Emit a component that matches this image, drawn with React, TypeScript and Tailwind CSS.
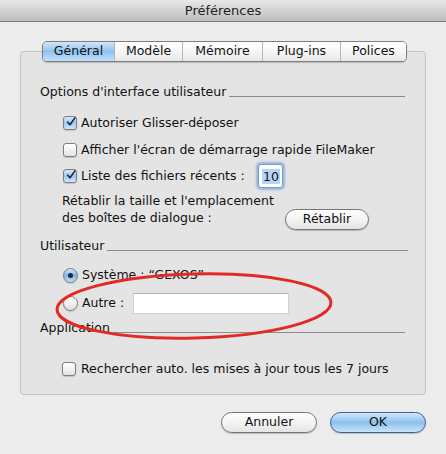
import React from "react";

function CheckBox({ checked }: { checked?: boolean }) {
  return (
    <span
      className={`w-[14px] h-[14px] shrink-0 rounded-[3px] border border-[#7d7d7d] flex items-center justify-center shadow-[0_1px_1px_rgba(0,0,0,0.15)] ${
        checked
          ? "bg-gradient-to-b from-[#d6e9fb] via-[#9cc8ef] to-[#cfe6fb]"
          : "bg-gradient-to-b from-[#ffffff] via-[#f2f2f2] to-[#e2e2e2]"
      }`}
    >
      {checked && (
        <svg width="14" height="14" viewBox="0 0 14 14" className="-mt-[3px] ml-[2px]">
          <path d="M2.5 7.2 L5.6 10.8 L12.5 1.2" fill="none" stroke="#1c2430" strokeWidth="2.2" strokeLinecap="round" strokeLinejoin="round" />
        </svg>
      )}
    </span>
  );
}

function Radio({ checked }: { checked?: boolean }) {
  return (
    <span
      className={`w-[15px] h-[15px] shrink-0 rounded-full border border-[#7d7d7d] flex items-center justify-center shadow-[0_1px_1px_rgba(0,0,0,0.15)] ${
        checked
          ? "bg-gradient-to-b from-[#d0e6fb] via-[#7fb6ea] to-[#c4e0fa]"
          : "bg-gradient-to-b from-[#ffffff] via-[#f0f0f0] to-[#dedede]"
      }`}
    >
      {checked && <span className="w-[5px] h-[5px] rounded-full bg-[#1d2a3a]" />}
    </span>
  );
}

function Heading({ label, pr }: { label: string; pr: string }) {
  return (
    <div className={`flex items-center h-[18px] ${pr}`}>
      <span>{label}</span>
      <span className="flex-1 h-px bg-[#8c8c8c] ml-[3px] mt-[8px]" />
    </div>
  );
}

function PillButton({ label, primary, className = "" }: { label: string; primary?: boolean; className?: string }) {
  return (
    <button
      className={`h-[21px] shrink-0 rounded-full border flex items-center justify-center shadow-[0_1px_1px_rgba(0,0,0,0.2)] ${
        primary
          ? "border-[#3e5f8f] bg-gradient-to-b from-[#d3e8fb] via-[#8cc0ee] to-[#c8e4fb]"
          : "border-[#747474] bg-gradient-to-b from-[#ffffff] via-[#f3f3f3] to-[#e4e4e4]"
      } ${className}`}
    >
      {label}
    </button>
  );
}

const tabs = [
  { label: "Général", w: "w-[71px]", active: true },
  { label: "Modèle", w: "w-[68px]" },
  { label: "Mémoire", w: "w-[80px]" },
  { label: "Plug-ins", w: "w-[78px]" },
  { label: "Polices", w: "w-[66px]" },
];

export default function App() {
  return (
    <div className="w-[446px] h-[454px] bg-[#ececec] flex flex-col text-[12.5px] text-[#111] font-['DejaVu_Sans',sans-serif] overflow-hidden">
      {/* title bar */}
      <div className="h-[22px] shrink-0 flex items-center justify-center bg-gradient-to-b from-[#e9e9e9] to-[#bdbdbd] border-b border-[#7a7a7a] text-[13px] text-[#222]">
        Préférences
      </div>

      <div className="px-[20px] pt-[19px]">
        {/* tabs */}
        <div className="flex justify-center relative z-10">
          <div className="flex h-[21px] rounded-[5px] border border-[#7e7e7e] overflow-hidden shadow-[0_1px_1px_rgba(0,0,0,0.2)] ml-[3px]">
            {tabs.map((t, i) => (
              <div
                key={t.label}
                className={`${t.w} flex items-center justify-center ${i > 0 ? "border-l border-[#b5b5b5]" : ""} ${
                  t.active
                    ? "bg-gradient-to-b from-[#d2e7fb] via-[#8fc2ef] to-[#c2e0fb]"
                    : "bg-gradient-to-b from-[#ffffff] via-[#f6f6f6] to-[#e8e8e8]"
                }`}
              >
                {t.label}
              </div>
            ))}
          </div>
        </div>

        {/* tab panel */}
        <div className="relative -mt-[11px] h-[344px] rounded-[4px] border border-[#c2c2c2] bg-[#e4e4e4] pl-[19px] pt-[31px]">
          <Heading label="Options d'interface utilisateur" pr="pr-[20px]" />

          <div className="pl-[23px]">
            <div className="mt-[12px] h-[20px] flex items-center gap-[4px]">
              <CheckBox checked />
              <span>Autoriser Glisser-déposer</span>
            </div>
            <div className="mt-[7px] h-[20px] flex items-center gap-[4px]">
              <CheckBox />
              <span>Afficher l'écran de démarrage rapide FileMaker</span>
            </div>
            <div className="mt-[4px] h-[24px] flex items-center gap-[4px]">
              <CheckBox checked />
              <span className="w-[173px]">Liste des fichiers récents :</span>
              <span className="w-[25px] h-[24px] rounded-[3px] border border-[#6d9fd6] shadow-[0_0_2px_2px_rgba(90,150,220,0.55)] bg-white flex items-center pl-[3px]">
                <span className="bg-[#b8d4f6] leading-[15px] px-[1px]">10</span>
              </span>
            </div>
            <div className="mt-[4px] flex items-start -ml-[1px]">
              <div className="w-[223px] leading-[17px]">
                <div>Rétablir la taille et l'emplacement</div>
                <div>des boîtes de dialogue :</div>
              </div>
              <PillButton label="Rétablir" className="mt-[17px] w-[84px]" />
            </div>
          </div>

          <div className="mt-[7px]">
            <Heading label="Utilisateur" pr="pr-[17px]" />
          </div>

          <div className="pl-[23px]">
            <div className="mt-[10px] h-[20px] flex items-center gap-[4px]">
              <Radio checked />
              <span>Système : “GEXOS”</span>
            </div>
            <div className="mt-[7px] h-[22px] flex items-center gap-[4px]">
              <Radio />
              <span className="w-[47px]">Autre :</span>
              <span className="w-[156px] h-[21px] bg-white border border-[#d2d2d2] border-t-[#b0b0b0]" />
            </div>
          </div>

          <div className="mt-[5px]">
            <Heading label="Application" pr="pr-[20px]" />
          </div>

          <div className="pl-[22px] mt-[22px] h-[20px] flex items-center gap-[5px]">
            <CheckBox />
            <span>Rechercher auto. les mises à jour tous les 7 jours</span>
          </div>

          {/* red annotation ellipse */}
          <svg className="absolute left-[31px] top-[217px] pointer-events-none" width="284" height="74" viewBox="0 0 284 74">
            <ellipse cx="142" cy="37" rx="137" ry="32" fill="none" stroke="#e12a23" strokeWidth="3" transform="rotate(-1.5 142 37)" />
          </svg>
        </div>

        {/* bottom buttons */}
        <div className="flex justify-end gap-[13px] mt-[17px]">
          <PillButton label="Annuler" className="w-[96px]" />
          <PillButton label="OK" primary className="w-[96px]" />
        </div>
      </div>
    </div>
  );
}
